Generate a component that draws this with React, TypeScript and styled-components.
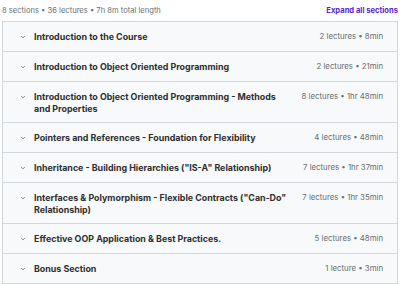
import React from 'react';
import styled, { createGlobalStyle } from 'styled-components';

const GlobalStyle = createGlobalStyle`
  html, body {
    margin: 0;
    padding: 0;
    background: #ffffff;
  }
  body {
    font-family: Inter, "Noto Sans", Arial, sans-serif;
    color: #2d2f31;
  }
`;

const Page = styled.div`
  width: 400px;
  height: 284px;
  overflow: hidden;
  padding: 0 2px;
  box-sizing: border-box;
`;

const Header = styled.div`
  display: flex;
  align-items: center;
  justify-content: space-between;
  height: 21px;
`;

const Summary = styled.span`
  font-size: 7.6px;
  color: #6a6f73;
`;

const ExpandButton = styled.button`
  border: 0;
  padding: 0;
  background: transparent;
  color: #5624d0;
  font-family: inherit;
  font-size: 7.6px;
  font-weight: 700;
  cursor: pointer;
`;

const List = styled.div`
  border: 1px solid #d1d7dc;
  border-bottom: 0;
`;

const Section = styled.div`
  display: flex;
  align-items: flex-start;
  gap: 7px;
  min-height: 30px;
  padding: 9px 14px 8px 16px;
  box-sizing: border-box;
  background: #f7f9fa;
  border-bottom: 1px solid #d1d7dc;
`;

const Chevron = styled.span`
  display: inline-flex;
  flex: 0 0 auto;
  margin-top: 2px;
  color: #3e4143;
`;

const Title = styled.div`
  flex: 1 1 auto;
  max-width: 257px;
  font-size: 8.9px;
  font-weight: 700;
  line-height: 11.5px;
  hyphens: none;
`;

const Meta = styled.div`
  margin-left: auto;
  flex: 0 0 auto;
  font-size: 7.8px;
  line-height: 11.5px;
  color: #6a6f73;
  white-space: nowrap;
`;

const ChevronDown = () => (
  <svg width="8" height="8" viewBox="0 0 24 24" fill="none" aria-hidden="true">
    <path d="M7.5 10l4.5 4.5 4.5-4.5" stroke="currentColor" strokeWidth="2" strokeLinecap="round" strokeLinejoin="round" />
  </svg>
);

const sections = [
  { title: 'Introduction to the Course', meta: '2 lectures • 8min' },
  { title: 'Introduction to Object Oriented Programming', meta: '2 lectures • 21min' },
  { title: 'Introduction to Object Oriented Programming - Methods and Properties', meta: '8 lectures • 1hr 48min' },
  { title: 'Pointers and References - Foundation for Flexibility', meta: '4 lectures • 48min' },
  { title: 'Inheritance - Building Hierarchies ("IS-A" Relationship)', meta: '7 lectures • 1hr 37min' },
  { title: 'Interfaces & Polymorphism - Flexible Contracts ("Can\u2011Do" Relationship)', meta: '7 lectures • 1hr 35min' },
  { title: 'Effective OOP Application & Best Practices.', meta: '5 lectures • 48min' },
  { title: 'Bonus Section', meta: '1 lecture • 3min' },
];

export default function App() {
  return (
    <Page>
      <GlobalStyle />
      <Header>
        <Summary>8 sections • 36 lectures • 7h 8m total length</Summary>
        <ExpandButton type="button">Expand all sections</ExpandButton>
      </Header>
      <List>
        {sections.map((s) => (
          <Section key={s.title}>
            <Chevron>
              <ChevronDown />
            </Chevron>
            <Title>{s.title}</Title>
            <Meta>{s.meta}</Meta>
          </Section>
        ))}
      </List>
    </Page>
  );
}
